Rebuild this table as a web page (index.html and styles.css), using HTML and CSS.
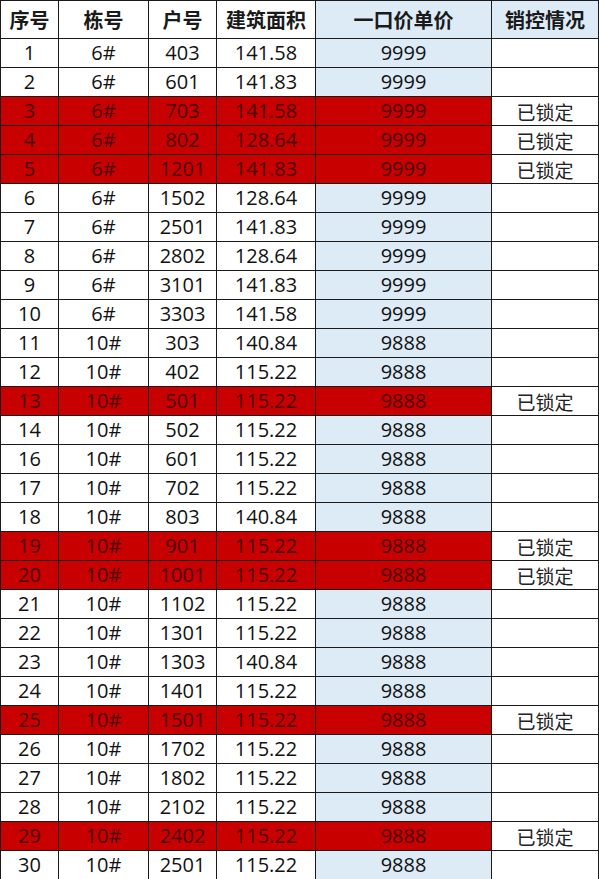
FILE: index.html
```html
<!DOCTYPE html>
<html lang="zh-CN">
<head>
<meta charset="utf-8">
<title>销控表</title>
<link rel="stylesheet" href="styles.css">
</head>
<body>
<table class="sheet">
<colgroup>
<col class="c1"><col class="c2"><col class="c3"><col class="c4"><col class="c5"><col class="c6">
</colgroup>
<thead>
<tr class="head"><th>序号</th><th>栋号</th><th>户号</th><th>建筑面积</th><th class="price">一口价单价</th><th class="price">销控情况</th></tr>
</thead>
<tbody>
<tr><td>1</td><td>6#</td><td>403</td><td>141.58</td><td class="price">9999</td><td></td></tr>
<tr><td>2</td><td>6#</td><td>601</td><td>141.83</td><td class="price">9999</td><td></td></tr>
<tr class="locked"><td>3</td><td>6#</td><td>703</td><td>141.58</td><td class="price">9999</td><td class="state">已锁定</td></tr>
<tr class="locked"><td>4</td><td>6#</td><td>802</td><td>128.64</td><td class="price">9999</td><td class="state">已锁定</td></tr>
<tr class="locked"><td>5</td><td>6#</td><td>1201</td><td>141.83</td><td class="price">9999</td><td class="state">已锁定</td></tr>
<tr><td>6</td><td>6#</td><td>1502</td><td>128.64</td><td class="price">9999</td><td></td></tr>
<tr><td>7</td><td>6#</td><td>2501</td><td>141.83</td><td class="price">9999</td><td></td></tr>
<tr><td>8</td><td>6#</td><td>2802</td><td>128.64</td><td class="price">9999</td><td></td></tr>
<tr><td>9</td><td>6#</td><td>3101</td><td>141.83</td><td class="price">9999</td><td></td></tr>
<tr><td>10</td><td>6#</td><td>3303</td><td>141.58</td><td class="price">9999</td><td></td></tr>
<tr><td>11</td><td>10#</td><td>303</td><td>140.84</td><td class="price">9888</td><td></td></tr>
<tr><td>12</td><td>10#</td><td>402</td><td>115.22</td><td class="price">9888</td><td></td></tr>
<tr class="locked"><td>13</td><td>10#</td><td>501</td><td>115.22</td><td class="price">9888</td><td class="state">已锁定</td></tr>
<tr><td>14</td><td>10#</td><td>502</td><td>115.22</td><td class="price">9888</td><td></td></tr>
<tr><td>16</td><td>10#</td><td>601</td><td>115.22</td><td class="price">9888</td><td></td></tr>
<tr><td>17</td><td>10#</td><td>702</td><td>115.22</td><td class="price">9888</td><td></td></tr>
<tr><td>18</td><td>10#</td><td>803</td><td>140.84</td><td class="price">9888</td><td></td></tr>
<tr class="locked"><td>19</td><td>10#</td><td>901</td><td>115.22</td><td class="price">9888</td><td class="state">已锁定</td></tr>
<tr class="locked"><td>20</td><td>10#</td><td>1001</td><td>115.22</td><td class="price">9888</td><td class="state">已锁定</td></tr>
<tr><td>21</td><td>10#</td><td>1102</td><td>115.22</td><td class="price">9888</td><td></td></tr>
<tr><td>22</td><td>10#</td><td>1301</td><td>115.22</td><td class="price">9888</td><td></td></tr>
<tr><td>23</td><td>10#</td><td>1303</td><td>140.84</td><td class="price">9888</td><td></td></tr>
<tr><td>24</td><td>10#</td><td>1401</td><td>115.22</td><td class="price">9888</td><td></td></tr>
<tr class="locked"><td>25</td><td>10#</td><td>1501</td><td>115.22</td><td class="price">9888</td><td class="state">已锁定</td></tr>
<tr><td>26</td><td>10#</td><td>1702</td><td>115.22</td><td class="price">9888</td><td></td></tr>
<tr><td>27</td><td>10#</td><td>1802</td><td>115.22</td><td class="price">9888</td><td></td></tr>
<tr><td>28</td><td>10#</td><td>2102</td><td>115.22</td><td class="price">9888</td><td></td></tr>
<tr class="locked"><td>29</td><td>10#</td><td>2402</td><td>115.22</td><td class="price">9888</td><td class="state">已锁定</td></tr>
<tr><td>30</td><td>10#</td><td>2501</td><td>115.22</td><td class="price">9888</td><td></td></tr>
</tbody>
</table>
</body>
</html>
```
FILE: styles.css
```css
html, body {
  margin: 0;
  padding: 0;
  background: #ffffff;
}
.sheet {
  width: 598px;
  border-collapse: collapse;
  table-layout: fixed;
  font-family: "Open Sans", "Noto Sans CJK SC", sans-serif;
  font-size: 20px;
  color: #111111;
}
.c1 { width: 58px; }
.c2 { width: 90px; }
.c3 { width: 68px; }
.c4 { width: 99px; }
.c5 { width: 176px; }
.c6 { width: 107px; }
.sheet th,
.sheet td {
  border: 1px solid #1a1a1a;
  padding: 0;
  text-align: center;
  vertical-align: middle;
  line-height: 1;
  overflow: hidden;
  white-space: nowrap;
}
.sheet th {
  height: 37px;
  font-family: "Noto Sans CJK SC", sans-serif;
  font-weight: 700;
  font-size: 20px;
  color: #1a1a1a;
}
.sheet td {
  height: 28px;
}
.price {
  background: #ddebf7;
}
.locked td {
  background: #c80000;
  color: #4a0606;
}
.locked td.state {
  background: #ffffff;
  color: #222222;
  font-family: "Noto Sans CJK SC", sans-serif;
  font-size: 19px;
}
```
